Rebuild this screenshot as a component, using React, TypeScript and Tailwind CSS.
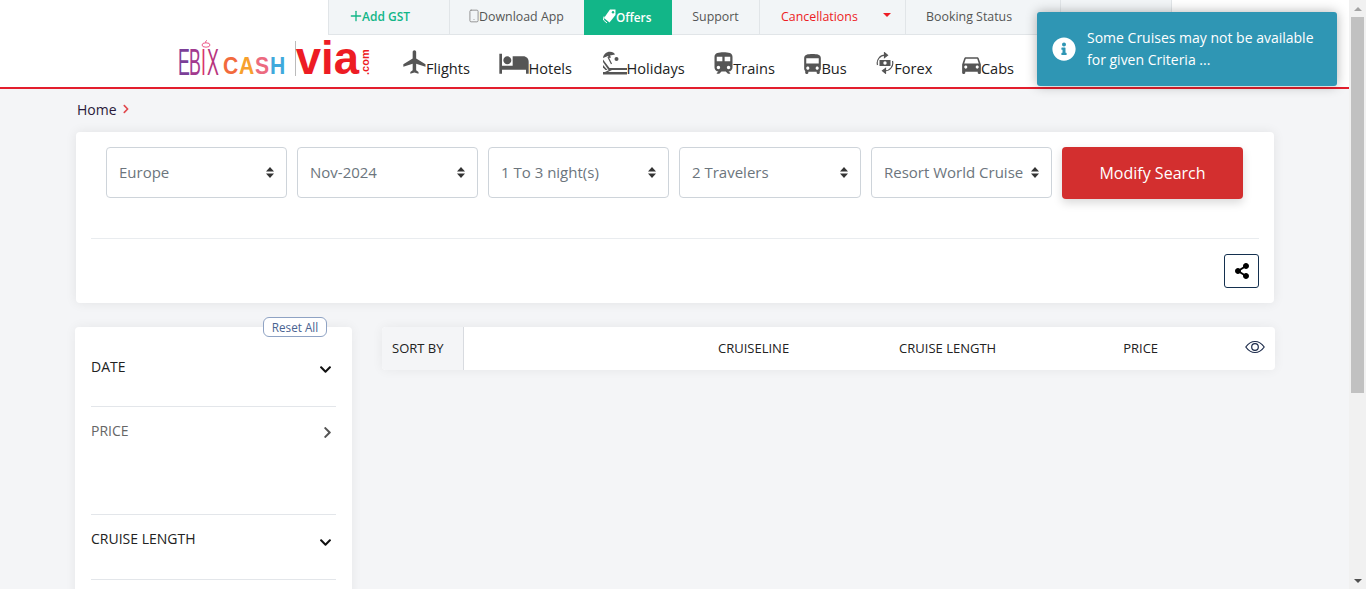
import React from 'react';
import { FaInfoCircle, FaShareAlt, FaChevronDown, FaChevronRight } from 'react-icons/fa';
import { MdFlight, MdHotel, MdTrain, MdDirectionsBus, MdDirectionsCar } from 'react-icons/md';
import { Plus, Smartphone } from 'lucide-react';

const HolidayIcon = () => (
  <svg width="25" height="24" viewBox="0 0 25 24" fill="#555" className="-mb-px">
    {/* umbrella */}
    <path d="M1 7C1.5 2 7 -1 12 2L13 3.5L8 4.5L9 6.5L7 7L6 5L1 7Z" />
    <path d="M6 6L9.5 13" stroke="#555" strokeWidth="1.2" fill="none" />
    <circle cx="14.5" cy="8" r="2" />
    {/* lounger */}
    <path d="M1 8.5L7.5 17H25V19H6.5L1 11Z" />
    <path d="M1 14L5.5 19H3.5L1 16.5Z" />
    <path d="M1 21H25V23.5H1Z" />
    <path d="M7 19L3 21H6L10 19Z" />
  </svg>
);

const ForexIcon = () => (
  <svg width="18" height="22" viewBox="0 0 18 22" fill="none" stroke="#555" strokeWidth="1.2">
    <path d="M1.5 13A7.8 7.8 0 0 1 9 3.2" />
    <path d="M16.5 9A7.8 7.8 0 0 1 9 18.8" />
    <path d="M8.5 0.8L11.5 3.2L8.5 5.6Z" fill="#555" />
    <path d="M9.5 16.4L6.5 18.8L9.5 21.2Z" fill="#555" />
    <rect x="3.5" y="8" width="11" height="6" fill="#555" stroke="none" />
    <circle cx="9" cy="11" r="1.7" fill="#fff" stroke="none" />
  </svg>
);

const OfferIcon = () => (
  <svg width="13" height="15" viewBox="0 0 13 15" className="-mt-[3px]">
    <path d="M7 0.5H12.5V6L6.5 13.5L1 9Z" fill="#fff" />
    <circle cx="10" cy="3.2" r="1.2" fill="#12b688" />
    <path d="M1 7.5L0.5 11L4 14" fill="none" stroke="#fff" strokeWidth="1" />
  </svg>
);

const SortArrows = () => (
  <svg width="8" height="11" viewBox="0 0 8 11" fill="#333" className="shrink-0">
    <path d="M4 0L8 4.5H0Z" />
    <path d="M4 11L8 6.5H0Z" />
  </svg>
);

const EyeIcon = () => (
  <svg width="20" height="14" viewBox="0 0 20 14" fill="none" stroke="#1b2a4a" strokeWidth="1.2">
    <path d="M0.8 7C3.5 3.2 6.5 1.5 10 1.5S16.5 3.2 19.2 7C16.5 10.8 13.5 12.5 10 12.5S3.5 10.8 0.8 7Z" />
    <circle cx="10" cy="7" r="3.3" />
  </svg>
);

const navItems = [
  { label: 'Flights', icon: <MdFlight size={28} color="#555" className="-mx-[3px] mb-[2px]" /> },
  { label: 'Hotels', icon: <MdHotel size={32} color="#555" className="-mx-[1.5px] -mb-[1px]" /> },
  { label: 'Holidays', icon: <span className="mb-[4px] flex"><HolidayIcon /></span> },
  { label: 'Trains', icon: <MdTrain size={27} color="#555" className="-mx-[4px] mb-[1px]" /> },
  { label: 'Bus', icon: <MdDirectionsBus size={25} color="#555" className="-mx-[4px] mb-[1px]" /> },
  { label: 'Forex', icon: <span className="mb-[4px] flex"><ForexIcon /></span> },
  { label: 'Cabs', icon: <MdDirectionsCar size={25} color="#555" className="-mx-[3px] mb-[1px]" /> },
];

const selects = [
  { value: 'Europe', width: 'w-[181px]' },
  { value: 'Nov-2024', width: 'w-[181px]' },
  { value: '1 To 3 night(s)', width: 'w-[181px]' },
  { value: '2 Travelers', width: 'w-[182px]' },
  { value: 'Resort World Cruise', width: 'w-[181px]' },
];

const ebixLetters = [
  { ch: 'E', c: 'text-[#7b3f98]', w: 'w-[11px]' },
  { ch: 'B', c: 'text-[#a23a8f]', w: 'w-[12px]' },
  { ch: 'I', c: 'text-[#d9346f]', w: 'w-[6px]' },
  { ch: 'X', c: 'text-[#b8357e]', w: 'w-[12px]' },
];

const cashLetters = [
  { ch: 'C', c: 'text-[#f26a3d]', w: 'w-[16px]' },
  { ch: 'A', c: 'text-[#f7a02c]', w: 'w-[16px]' },
  { ch: 'S', c: 'text-[#ec6a7f]', w: 'w-[15px]' },
  { ch: 'H', c: 'text-[#3fa9dc]', w: 'w-[16px]' },
];

const Logo = () => (
  <div className="flex items-end h-[42px] w-[192px] -mb-[1px] font-['Liberation_Sans',sans-serif]">
    <div className="flex items-end w-[108px] relative">
      {ebixLetters.map(l => (
        <span
          key={l.ch}
          className={`${l.c} ${l.w} text-[37px] leading-[32px] scale-x-[0.48] origin-left`}
        >
          {l.ch}
        </span>
      ))}
      <span className="w-[4px]" />
      {cashLetters.map(l => (
        <span
          key={l.ch}
          className={`${l.c} ${l.w} font-bold text-[24px] leading-[26px] scale-x-[0.88] origin-left`}
        >
          {l.ch}
        </span>
      ))}
      {/* swirl above the I */}
      <svg width="10" height="8" viewBox="0 0 10 8" fill="none" stroke="#ec5a8a" strokeWidth="1" className="absolute left-[23px] -top-[7px]">
        <ellipse cx="5" cy="5" rx="4" ry="2.2" />
        <path d="M5 3C4 2 4.5 1 6 0.5" />
      </svg>
    </div>
    <div className="w-px h-[35px] bg-[#bbb] ml-[9px] mb-[3px]" />
    <span className="text-[#ed1c24] font-bold text-[45.5px] leading-[42px] -mb-[1px]">via</span>
    <span className="text-[#ed1c24] font-bold text-[11px] leading-[10px] -rotate-90 w-[10px] ml-[1px] mb-[4px]">.com</span>
  </div>
);

const FilterRow = ({
  title,
  open,
  className,
  chevronClass,
}: {
  title: string;
  open: boolean;
  className: string;
  chevronClass?: string;
}) => (
  <div className={`flex justify-between border-b border-[#e3e6ea] ${className}`}>
    <span className={`text-[14px] leading-[20px] ${open ? 'text-[#222]' : 'text-[#666]'}`}>{title}</span>
    {open ? (
      <FaChevronDown size={13} color="#111" className={`mr-[4px] ${chevronClass}`} />
    ) : (
      <FaChevronRight size={13} color="#555" className={`mr-[2px] ${chevronClass}`} />
    )}
  </div>
);

const App: React.FC = () => {
  return (
    <div className="relative flex w-[1366px] h-[589px] overflow-hidden bg-[#f4f5f7] font-['Open_Sans',sans-serif]">
      <div className="w-[1349px] shrink-0">
        {/* Top strip */}
        <div className="bg-white pl-[328px]">
          <div className="flex h-[35px] text-[12.4px] w-[844px]">
            <div className="w-[122px] flex items-center pl-[19px] bg-[#f2f5f7] border-l border-r border-b border-[#e1e5e8] text-[#12b688] text-[12px] font-semibold">
              <Plus size={16} strokeWidth={2} className="-mt-[3px] -mr-[2px]" />
              Add GST
            </div>
            <div className="w-[134px] flex items-center pl-[20px] bg-[#f2f5f7] border-b border-[#e1e5e8] text-[#555]">
              <Smartphone size={14} color="#888" strokeWidth={1.5} className="-mt-[3px] -ml-[3px] -mr-[2px]" />
              Download App
            </div>
            <div className="w-[88px] flex items-center pl-[19px] bg-[#12b688] text-white text-[11.8px] font-semibold">
              <OfferIcon />
              Offers
            </div>
            <div className="w-[88px] flex items-center justify-center bg-[#f2f5f7] border-r border-b border-[#e1e5e8] text-[#555]">
              Support
            </div>
            <div className="w-[146px] flex items-center pl-[21px] bg-[#f2f5f7] border-r border-b border-[#e1e5e8] text-[#ed1c24] relative">
              Cancellations
              <span className="absolute left-[123px] top-[13px] w-0 h-0 border-x-[4px] border-x-transparent border-t-[4px] border-t-[#ed1c24]" />
            </div>
            <div className="w-[155px] flex items-center pl-[20px] bg-[#f2f5f7] border-r border-b border-[#e1e5e8] text-[#555]">
              Booking Status
            </div>
            <div className="w-[111px] bg-[#f2f5f7] border-r border-b border-[#e1e5e8]" />
          </div>

          {/* Main nav */}
          <div className="flex items-end h-[52px] -ml-[150px] pb-[9px]">
            <Logo />
            <nav className="flex items-end gap-[29.5px] ml-[34px]">
              {navItems.map(item => (
                <div key={item.label} className="flex items-end text-[14.6px] leading-[20px] text-[#222]">
                  {item.icon}
                  <span>{item.label}</span>
                </div>
              ))}
            </nav>
          </div>
        </div>
        <div className="h-[2px] bg-[#e31e2d]" />

        <div className="pl-[75px] pr-[74px]">
          {/* Breadcrumb */}
          <div className="flex items-center h-[43px] pl-[2px] pb-[3px] text-[14px] text-[#2a1a3a]">
            Home
            <FaChevronRight size={10} color="#e0484d" className="ml-[4px]" />
          </div>

          {/* Search card */}
          <div className="ml-[1px] w-[1198px] h-[171px] bg-white rounded-[4px] shadow-[0_0_12px_rgba(0,0,0,0.08)] pt-[15px] px-[15px]">
            <div className="flex gap-[10px] pl-[15px] h-[52px]">
              {selects.map(s => (
                <div
                  key={s.value}
                  className={`${s.width} h-[51px] flex items-center justify-between pl-[12px] pr-[12px] border border-[#ced4da] rounded-[4px] text-[15px] text-[#6c757d] whitespace-nowrap`}
                >
                  <span>{s.value}</span>
                  <SortArrows />
                </div>
              ))}
              <button className="w-[181px] h-[52px] bg-[#d32f2f] text-white text-[16px] rounded-[4px] shadow-[0_4px_10px_rgba(0,0,0,0.15)]">
                Modify Search
              </button>
            </div>
            <div className="mt-[39px] border-t border-[#e9ecef]" />
            <div className="flex justify-end pt-[15px]">
              <button className="w-[35px] h-[34px] flex items-center justify-center border border-[#14304f] rounded-[3px]">
                <FaShareAlt size={16} color="#000" />
              </button>
            </div>
          </div>

          <div className="flex mt-[24px] gap-[30px]">
            {/* Filters */}
            <aside className="relative w-[277px] h-[300px] shrink-0 bg-white rounded-[4px] shadow-[0_0_12px_rgba(0,0,0,0.06)] px-[16px] pt-[30px]">
              <button className="absolute left-[188px] -top-[10px] w-[64px] h-[20px] text-[11.7px] leading-[18px] text-[#4a6391] bg-white border border-[#8fa3c4] rounded-[6px]">
                Reset All
              </button>
              <FilterRow title="DATE" open className="h-[50px]" chevronClass="mt-[6px]" />
              <FilterRow title="PRICE" open={false} className="h-[108px] pt-[14px]" chevronClass="mt-[5px]" />
              <FilterRow title="CRUISE LENGTH" open className="h-[65px] pt-[14px]" chevronClass="mt-[7px]" />
            </aside>

            {/* Sort bar */}
            <div className="flex w-[893px] h-[43px] bg-white rounded-[4px] shadow-[0_0_12px_rgba(0,0,0,0.06)] text-[13px] text-[#222]">
              <div className="w-[82px] flex items-center pl-[10px] bg-[#f4f5f7] border-r border-[#d8dbe0] rounded-l-[4px]">
                SORT BY
              </div>
              <div className="flex flex-1 items-center pl-[254px]">
                <span>CRUISELINE</span>
                <span className="ml-[110px]">CRUISE LENGTH</span>
                <span className="ml-[127px]">PRICE</span>
                <span className="ml-[87px] -mt-[3px] flex"><EyeIcon /></span>
              </div>
            </div>
          </div>
        </div>
      </div>

      {/* Scrollbar */}
      <div className="w-[17px] h-[589px] bg-[#f1f1f1] flex flex-col pl-[2px]">
        <div className="w-[13px] h-[17px] flex items-center justify-center">
          <span className="w-0 h-0 border-x-[4px] border-x-transparent border-b-[4px] border-b-[#a3a3a3]" />
        </div>
        <div className="w-[13px] h-[376px] bg-[#c1c1c1]" />
        <div className="flex-1" />
        <div className="w-[13px] h-[17px] flex items-center justify-center">
          <span className="w-0 h-0 border-x-[4px] border-x-transparent border-t-[4px] border-t-[#505050]" />
        </div>
      </div>

      {/* Toast */}
      <div className="absolute left-[1037px] top-[12px] w-[300px] h-[74px] flex items-center bg-[#2f96b4] rounded-[3px] shadow-[0_0_12px_rgba(0,0,0,0.3)] text-white text-[14px] leading-[22px] font-medium">
        <FaInfoCircle size={24} className="ml-[15px] shrink-0" />
        <div className="ml-[11px]">
          Some Cruises may not be available
          <br />
          for given Criteria ...
        </div>
      </div>
    </div>
  );
};

export default App;
